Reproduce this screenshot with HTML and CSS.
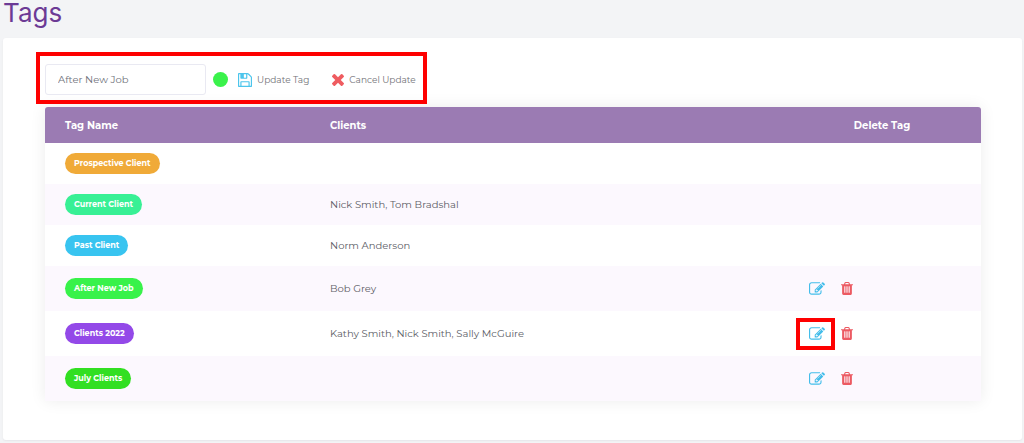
FILE: index.html
```
<!DOCTYPE html>
<html lang="en">
<head>
<meta charset="utf-8">
<meta name="viewport" content="width=device-width, initial-scale=1">
<title>Tags</title>
<link rel="stylesheet" href="styles.css">
</head>
<body>
<svg class="sprite" aria-hidden="true">
  <symbol id="save" viewBox="128 128 1536 1536"><path d="M512 1536h768v-384h-768v384zm896 0h128v-896q0-14-10-38.5t-20-34.5l-281-281q-10-10-34-20t-39-10v416q0 40-28 68t-68 28h-576q-40 0-68-28t-28-68v-416h-128v1280h128v-416q0-40 28-68t68-28h832q40 0 68 28t28 68v416zm-384-928v-320q0-13-9.5-22.5t-22.5-9.5h-192q-13 0-22.5 9.5t-9.5 22.5v320q0 13 9.5 22.5t22.5 9.5h192q13 0 22.5-9.5t9.5-22.5zm640 32v928q0 40-28 68t-68 28h-1344q-40 0-68-28t-28-68v-1344q0-40 28-68t68-28h928q40 0 88 20t76 48l280 280q28 28 48 76t20 88z"/></symbol>
  <symbol id="times" viewBox="302 366 1188 1188"><path d="M1490 1322q0 40-28 68l-136 136q-28 28-68 28t-68-28l-294-294-294 294q-28 28-68 28t-68-28l-136-136q-28-28-28-68t28-68l294-294-294-294q-28-28-28-68t28-68l136-136q28-28 68-28t68 28l294 294 294-294q28-28 68-28t68 28l136 136q28 28 28 68t-28 68l-294 294 294 294q28 28 28 68z"/></symbol>
  <symbol id="edit" viewBox="0 0 1792 1792"><path d="M888 1184l116-116-152-152-116 116v56h96v96h56zm440-720q-16-16-33 1l-350 350q-17 17-1 33t33-1l350-350q17-17 1-33zm80 594v190q0 119-84.5 203.5t-203.5 84.5h-832q-119 0-203.5-84.5t-84.5-203.5v-832q0-119 84.5-203.5t203.5-84.5h832q63 0 117 25 15 7 18 23 3 17-9 29l-49 49q-14 14-32 8-23-6-45-6h-832q-66 0-113 47t-47 113v832q0 66 47 113t113 47h832q66 0 113-47t47-113v-126q0-13 9-22l64-64q15-15 35-7t20 29zm-96-738l288 288-672 672h-288v-288zm444 132l-92 92-288-288 92-92q28-28 68-28t68 28l152 152q28 28 28 68t-28 68z"/></symbol>
  <symbol id="trash" viewBox="192 128 1408 1536"><path d="M704 1376v-704q0-14-9-23t-23-9h-64q-14 0-23 9t-9 23v704q0 14 9 23t23 9h64q14 0 23-9t9-23zm256 0v-704q0-14-9-23t-23-9h-64q-14 0-23 9t-9 23v704q0 14 9 23t23 9h64q14 0 23-9t9-23zm256 0v-704q0-14-9-23t-23-9h-64q-14 0-23 9t-9 23v704q0 14 9 23t23 9h64q14 0 23-9t9-23zm-544-992h448l-48-117q-7-9-17-11h-317q-10 2-17 11zm928 32v64q0 14-9 23t-23 9h-96v948q0 83-47 143.5t-113 60.5h-832q-66 0-113-58.5t-47-141.5v-952h-96q-14 0-23-9t-9-23v-64q0-14 9-23t23-9h309l70-167q15-37 54-63t79-26h320q40 0 79 26t54 63l70 167h309q14 0 23 9t9 23z"/></symbol>
</svg>
<h1 class="title">Tags</h1>
<main class="card">
  <form class="editor">
    <input class="tag-input" type="text" value="After New Job" aria-label="Tag name">
    <button class="swatch" type="button" aria-label="Tag colour"></button>
    <button class="action" type="button"><svg class="icon-save"><use href="#save"/></svg>Update Tag</button>
    <button class="action cancel" type="button"><svg class="icon-times"><use href="#times"/></svg>Cancel Update</button>
    <span class="highlight highlight-form"></span>
  </form>
  <table class="tags">
    <colgroup><col class="col-name"><col><col class="col-delete"></colgroup>
    <thead>
      <tr><th scope="col">Tag Name</th><th scope="col">Clients</th><th class="center" scope="col">Delete Tag</th></tr>
    </thead>
    <tbody>
      <tr><td><span class="badge orange">Prospective Client</span></td><td></td><td></td></tr>
      <tr><td><span class="badge mint">Current Client</span></td><td>Nick Smith, Tom Bradshal</td><td></td></tr>
      <tr><td><span class="badge blue">Past Client</span></td><td>Norm Anderson</td><td></td></tr>
      <tr><td><span class="badge green">After New Job</span></td><td>Bob Grey</td>
        <td><div class="tools"><button class="tool" type="button" aria-label="Edit After New Job"><svg class="icon-edit"><use href="#edit"/></svg></button><button class="tool" type="button" aria-label="Delete After New Job"><svg class="icon-trash"><use href="#trash"/></svg></button></div></td></tr>
      <tr><td><span class="badge violet">Clients 2022</span></td><td>Kathy Smith, Nick Smith, Sally McGuire</td>
        <td><div class="tools"><button class="tool" type="button" aria-label="Edit Clients 2022"><svg class="icon-edit"><use href="#edit"/></svg><span class="highlight highlight-tool"></span></button><button class="tool" type="button" aria-label="Delete Clients 2022"><svg class="icon-trash"><use href="#trash"/></svg></button></div></td></tr>
      <tr><td><span class="badge leaf">July Clients</span></td><td></td>
        <td><div class="tools"><button class="tool" type="button" aria-label="Edit July Clients"><svg class="icon-edit"><use href="#edit"/></svg></button><button class="tool" type="button" aria-label="Delete July Clients"><svg class="icon-trash"><use href="#trash"/></svg></button></div></td></tr>
    </tbody>
  </table>
</main>
</body>
</html>
```
FILE: styles.css
```
* { box-sizing: border-box; }

body {
  margin: 0;
  padding: 0 2px 2px 3px;
  background: #f3f4f6;
  color: #5c5d66;
  font-family: Montserrat, Inter, "Open Sans", sans-serif;
  font-size: 10px;
}

button, input { font: inherit; color: inherit; }

button {
  padding: 0;
  border: 0;
  background: none;
  cursor: pointer;
}

svg { display: block; fill: currentColor; }

.sprite { position: absolute; width: 0; height: 0; }

.title {
  margin: 0;
  padding-bottom: 12px;
  color: #6c3a95;
  font-family: Inter, sans-serif;
  font-size: 26px;
  font-weight: 400;
  line-height: 26px;
}

.card {
  padding: 26px 41px 39px 42px;
  border-radius: 3px;
  background: #fff;
  box-shadow: 0 1px 2px #e6e6e9;
}

.editor {
  position: relative;
  display: flex;
  align-items: center;
  margin-bottom: 12px;
}

.tag-input {
  width: 161px;
  height: 31px;
  padding: 0 12px;
  border: 1px solid #e9e9f2;
  border-radius: 3px;
  background: #fff;
  color: #70727b;
}

.swatch {
  width: 15px;
  height: 15px;
  margin: 0 10px 0 7px;
  border-radius: 50%;
  background: #3af24b;
}

.action {
  display: flex;
  align-items: center;
  gap: 5px;
  color: #727277;
  font-size: 9px;
}

.cancel { margin-left: 23px; }

.icon-save { width: 14px; height: 14px; color: #4cc5ec; }
.icon-times { width: 12px; height: 12px; color: #ef5c60; }

.highlight {
  position: absolute;
  border: 4px solid #fe0000;
  pointer-events: none;
}

.highlight-form { top: -12px; left: -9px; width: 391px; height: 52px; }
.highlight-tool { top: -3px; left: -13px; width: 39px; height: 32px; }

.tags {
  width: 100%;
  table-layout: fixed;
  border-collapse: separate;
  border-spacing: 0;
  border-radius: 3px 3px 0 0;
  box-shadow: 0 0 16px rgba(0, 0, 0, 0.08);
}

.col-name { width: 265px; }
.col-delete { width: 198px; }

.tags th {
  height: 36px;
  padding: 0 20px;
  background: #9b7bb3;
  color: #fff;
  font-weight: 700;
  text-align: left;
}

.tags th:first-child { border-top-left-radius: 3px; }
.tags th:last-child { border-top-right-radius: 3px; }
.tags .center { text-align: center; }

.tags td { padding: 10px 20px; background: #fff; }
.tags tr:nth-child(even) td { background: #fcf8fe; }

.badge {
  display: block;
  width: fit-content;
  padding: 0 9px;
  border-radius: 11px;
  color: #fff;
  font-size: 8px;
  font-weight: 700;
  line-height: 21px;
}

.orange { background: #f0aa38; }
.mint { background: #38f095; }
.blue { background: #38c4f0; }
.green { background: #38f24a; }
.violet { background: #9349e8; }
.leaf { background: #32df22; }

.tools { display: flex; gap: 16px; padding-left: 6px; }

.tool {
  position: relative;
  display: flex;
  align-items: center;
  height: 25px;
}

.icon-edit { width: 16px; height: 16px; color: #43bdea; }
.icon-trash { width: 12px; height: 13px; color: #ec5a62; }
```
